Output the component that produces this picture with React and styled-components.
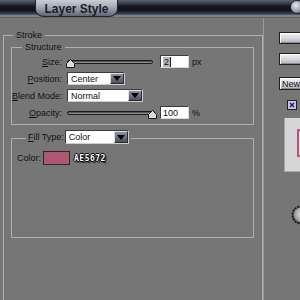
import React from "react";
import styled, { createGlobalStyle } from "styled-components";

const Global = createGlobalStyle`
  html, body { margin: 0; padding: 0; background: #767676; }
  body { font-family: "Liberation Sans", Arial, sans-serif; }
`;

const Window = styled.div`
  width: 300px;
  height: 300px;
  overflow: hidden;
  background: #767676;
  display: flex;
  flex-direction: column;
  color: #111;
  font-size: 9px;
`;

const TitleBar = styled.div`
  height: 18px;
  flex: none;
  display: flex;
  align-items: flex-start;
  background: linear-gradient(
    to bottom,
    #5a6271 0px,
    #3c434f 3px,
    #14181f 6px,
    #0e1116 10px,
    #2c3542 13px,
    #566170 15px,
    #9aa1aa 16px,
    #5e5e60 17px,
    #6c6c6c 18px
  );
`;

const Tab = styled.div`
  margin-left: 35px;
  width: 83px;
  height: 17px;
  box-sizing: border-box;
  border: 1px solid #20252e;
  border-top: none;
  border-radius: 0 0 9px 9px / 0 0 8px 8px;
  background: linear-gradient(to bottom, #c9ced6 0%, #a7aeba 40%, #7f8796 75%, #5d6472 100%);
  display: flex;
  align-items: center;
  justify-content: center;
  font-weight: bold;
  font-size: 12px;
  color: #1a1c26;
  padding-top: 1px;
`;

const Knob = styled.div`
  margin-left: auto;
  margin-right: -4px;
  width: 12px;
  height: 12px;
  border-radius: 50%;
  background: radial-gradient(circle at 40% 35%, #e4e8ee 0%, #9ca4b0 55%, #4c5360 100%);
  border: 1px solid #20242c;
`;

const Body = styled.div`
  flex: 1;
  display: flex;
  overflow: hidden;
`;

const Main = styled.div`
  width: 263px;
  flex: none;
  padding: 11px 0 0 3px;
  box-sizing: border-box;
`;

const Group = styled.fieldset`
  margin: ${(p) => p.$margin || "0"};
  padding: ${(p) => p.$padding || "0"};
  border: 1px solid #b0b0b0;
  min-width: 0;
  box-sizing: border-box;
  width: ${(p) => p.$width || "auto"};
`;

const Legend = styled.legend`
  margin-left: ${(p) => p.$offset}px;
  padding: ${(p) => p.$pad || "0 3px"};
  font-size: 9px;
  line-height: 12px;
  color: #111;
  display: flex;
  align-items: center;
  gap: ${(p) => p.$gap || 0}px;
`;

const Grid = styled.div`
  display: grid;
  grid-template-columns: 50px auto;
  grid-auto-rows: 17px;
  column-gap: 5px;
  align-items: center;
`;

const Label = styled.span`
  text-align: right;
  white-space: nowrap;
  font-size: 9px;
  color: #111;
`;

const Controls = styled.div`
  display: flex;
  align-items: center;
`;

const Track = styled.div`
  position: relative;
  width: 86px;
  height: 4px;
  box-sizing: border-box;
  border: 1px solid #1c1c1c;
  border-radius: 2px;
  background: #8c8c8c;
  box-shadow: inset 0 1px 0 #555;
  margin-right: 7px;
`;

const Thumb = styled.svg`
  position: absolute;
  top: -2px;
  width: 9px;
  height: 9px;
`;

const NumberField = styled.div`
  width: 29px;
  height: 13px;
  box-sizing: border-box;
  border: 1px solid #3a3a3a;
  border-right-color: #d8d8d8;
  border-bottom-color: #d8d8d8;
  background: #fff;
  display: flex;
  align-items: center;
  padding-left: 2px;
  font-size: 9px;
  color: #111;
`;

const Selected = styled.span`
  background: #b4b4c4;
  border-right: 1px solid #222;
  padding: 0 1px;
  line-height: 10px;
`;

const Unit = styled.span`
  margin-left: 3px;
  font-size: 9px;
  color: #111;
`;

const SelectBox = styled.div`
  width: ${(p) => p.$width}px;
  height: ${(p) => p.$height || 13}px;
  box-sizing: border-box;
  border: 1px solid #3c3c3c;
  border-right-color: #cfcfcf;
  border-bottom-color: #cfcfcf;
  background: #fff;
  display: flex;
  align-items: center;
  font-size: 9px;
  color: #111;
`;

const SelectText = styled.span`
  flex: 1;
  padding-left: 3px;
`;

const DropButton = styled.div`
  width: 14px;
  height: 100%;
  box-sizing: border-box;
  border: 1px solid #e0e0e0;
  border-right-color: #2a2a2a;
  border-bottom-color: #2a2a2a;
  background: linear-gradient(to bottom, #8c93a2, #4c5261);
  display: flex;
  align-items: center;
  justify-content: center;
`;

const ColorRow = styled.div`
  display: flex;
  align-items: center;
  height: 14px;
`;

const Swatch = styled.div`
  margin-left: 2px;
  width: 27px;
  height: 14px;
  box-sizing: border-box;
  border: 1px solid #2a2a2a;
  background: #ae5672;
`;

const Hex = styled.span`
  margin-left: 4px;
  font-family: "DejaVu Sans Mono", monospace;
  font-weight: bold;
  font-size: 8px;
  letter-spacing: 0.5px;
  color: #fff;
  text-shadow: 1px 0 0 #000, -1px 0 0 #000, 0 1px 0 #000, 0 -1px 0 #000, 2px 2px 1px #222;
`;

const Side = styled.div`
  flex: 1;
  border-left: 1px solid #9a9a9a;
  padding: 14px 0 0 15px;
  display: flex;
  flex-direction: column;
  align-items: flex-start;
  overflow: hidden;
`;

const Button = styled.div`
  flex: none;
  width: 70px;
  height: ${(p) => p.$h || 12}px;
  margin-top: ${(p) => p.$mt || 0}px;
  box-sizing: border-box;
  border: 1px solid #1e1e1e;
  box-shadow: inset 1px 1px 0 #fff, inset -1px -1px 0 #8a8a92;
  background: linear-gradient(to bottom, #f2f2f4 0%, #d8d8de 50%, #b0b0ba 100%);
  display: flex;
  align-items: center;
  justify-content: ${(p) => (p.$left ? "flex-start" : "center")};
  padding-left: ${(p) => (p.$left ? 2 : 0)}px;
  font-size: 9px;
  color: ${(p) => p.$color || "#111"};
  white-space: nowrap;
`;

const Check = styled.div`
  flex: none;
  margin: 10px 0 0 8px;
  width: 10px;
  height: 10px;
  box-sizing: border-box;
  border: 1px solid #1e1e1e;
  background: #c8c8d2;
  display: flex;
  align-items: center;
  justify-content: center;
`;

const Preview = styled.div`
  flex: none;
  margin: 8px 0 0 5px;
  width: 40px;
  height: 54px;
  box-sizing: border-box;
  background: #d6d6d6;
  border-left: 1px solid #a8a8a8;
  border-bottom: 1px solid #a8a8a8;
  padding: 11px 0 0 12px;
`;

const PreviewSquare = styled.div`
  width: 30px;
  height: 28px;
  box-sizing: border-box;
  border: 2px solid #b4547a;
  background: #e4e4e4;
`;

const Ball = styled.svg`
  flex: none;
  margin: 33px 0 0 12px;
  width: 20px;
  height: 20px;
`;

function Slider({ pos }) {
  return (
    <Track>
      <Thumb viewBox="0 0 9 9" style={{ left: pos === "end" ? 80 : -2 }}>
        <polygon points="4.5,0.5 8.5,4.5 8.5,8.5 0.5,8.5 0.5,4.5" fill="#dcdcdc" stroke="#1a1a1a" strokeWidth="1" />
      </Thumb>
    </Track>
  );
}

function Arrow() {
  return (
    <svg width="8" height="5" viewBox="0 0 8 5">
      <polygon points="0,0 8,0 4,5" fill="#000" />
    </svg>
  );
}

function Select({ width, height, children }) {
  return (
    <SelectBox $width={width} $height={height}>
      <SelectText>{children}</SelectText>
      <DropButton>
        <Arrow />
      </DropButton>
    </SelectBox>
  );
}

export default function App() {
  return (
    <>
      <Global />
      <Window>
        <TitleBar>
          <Tab>Layer Style</Tab>
          <Knob />
        </TitleBar>
        <Body>
          <Main>
            <Group $width="260px" $padding="0 8px 90px 7px">
              <Legend $offset={2}>Stroke</Legend>
              <Group $padding="0 0 3px 0">
                <Legend $offset={10}>Structure</Legend>
                <Grid>
                  <Label>
                    <u>S</u>ize:
                  </Label>
                  <Controls>
                    <Slider pos="start" />
                    <NumberField>
                      <Selected>2</Selected>
                    </NumberField>
                    <Unit>px</Unit>
                  </Controls>
                  <Label>
                    <u>P</u>osition:
                  </Label>
                  <Controls>
                    <Select width={58}>Center</Select>
                  </Controls>
                  <Label>
                    <u>B</u>lend Mode:
                  </Label>
                  <Controls>
                    <Select width={76}>Normal</Select>
                  </Controls>
                  <Label>
                    <u>O</u>pacity:
                  </Label>
                  <Controls>
                    <Slider pos="end" />
                    <NumberField>100</NumberField>
                    <Unit>%</Unit>
                  </Controls>
                </Grid>
              </Group>
              <Group $margin="5px 0 0 0" $padding="5px 0 72px 5px">
                <Legend $offset={9} $pad="0 2px 2px 2px" $gap={1}>
                  <span>
                    <u>F</u>ill Type:
                  </span>
                  <Select width={64} height={14}>Color</Select>
                </Legend>
                <ColorRow>
                  <Label>Color:</Label>
                  <Swatch />
                  <Hex>AE5672</Hex>
                </ColorRow>
              </Group>
            </Group>
          </Main>
          <Side>
            <Button>OK</Button>
            <Button $mt={9} $color="#b8782a">Cancel</Button>
            <Button $mt={12} $h={13} $left>New Style...</Button>
            <Check>
              <svg width="6" height="6" viewBox="0 0 6 6">
                <path d="M1 1 L5 5 M5 1 L1 5" stroke="#1a1aa0" strokeWidth="1.5" />
              </svg>
            </Check>
            <Preview>
              <PreviewSquare />
            </Preview>
            <Ball viewBox="0 0 20 20">
              <defs>
                <radialGradient id="ballg" cx="55%" cy="45%" r="60%">
                  <stop offset="0%" stopColor="#e8e8e8" />
                  <stop offset="70%" stopColor="#9a9a9a" />
                  <stop offset="100%" stopColor="#3a3a3a" />
                </radialGradient>
              </defs>
              <circle cx="10" cy="10" r="8.5" fill="url(#ballg)" stroke="#161616" strokeWidth="2" strokeDasharray="2 1" />
            </Ball>
          </Side>
        </Body>
      </Window>
    </>
  );
}
